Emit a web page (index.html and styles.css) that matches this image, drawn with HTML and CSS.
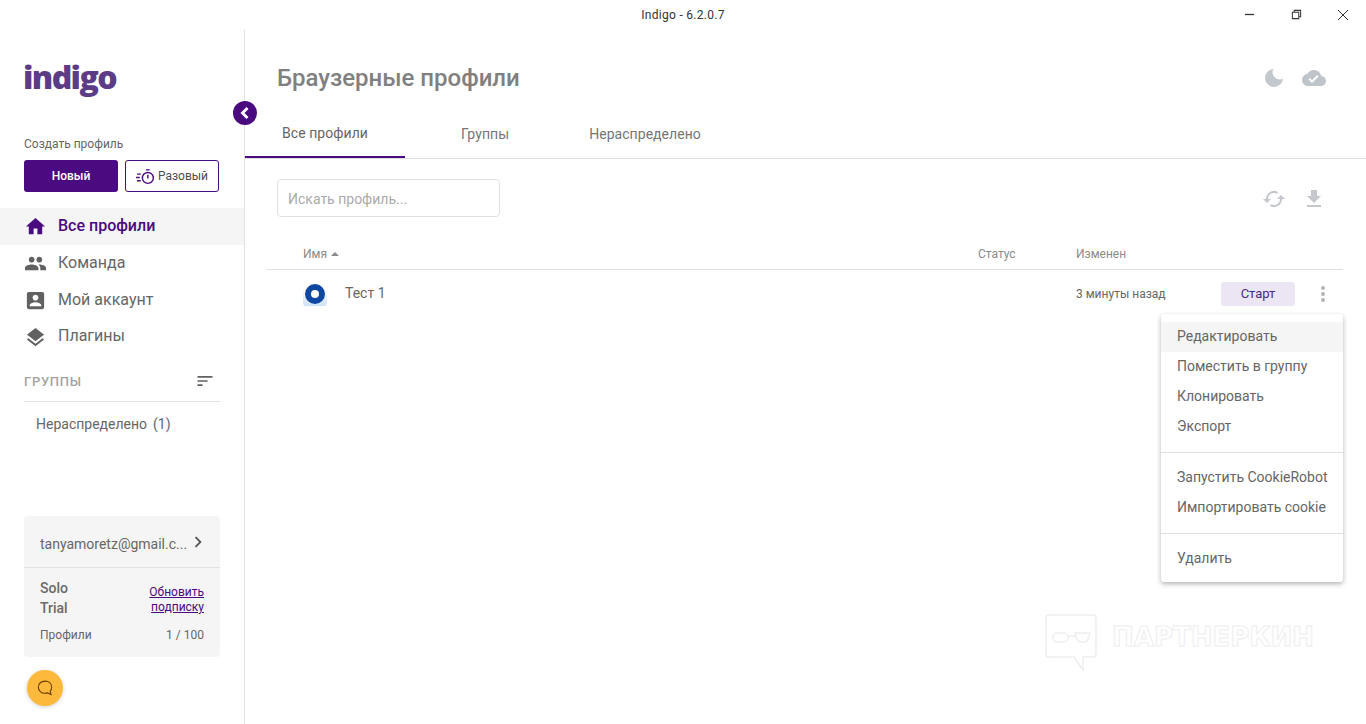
FILE: index.html
```html
<!DOCTYPE html>
<html lang="ru">
<head>
<meta charset="utf-8">
<title>Indigo</title>
<link rel="stylesheet" href="styles.css">
</head>
<body>
<header class="titlebar">
  <span class="titlebar-title">Indigo - 6.2.0.7</span>
  <div class="win-controls">
    <svg class="win-icon" viewBox="0 0 12 12"><path d="M1 6h10" stroke="#333" stroke-width="1.4" fill="none"/></svg>
    <svg class="win-icon" viewBox="0 0 12 12"><path d="M1.5 3.5h7v7h-7zM3.5 3.5v-2h7v7h-2" stroke="#333" stroke-width="1.1" fill="none"/></svg>
    <svg class="win-icon" viewBox="0 0 12 12"><path d="M1 1l10 10M11 1L1 11" stroke="#333" stroke-width="1" fill="none"/></svg>
  </div>
</header>
<div class="app">
  <aside class="sidebar">
    <div class="logo">indigo</div>
    <div class="create-label">Создать профиль</div>
    <div class="create-buttons">
      <button class="btn-primary">Новый</button>
      <button class="btn-outline">
        <svg class="timer-icon" viewBox="0 0 20 18"><g fill="none" stroke="#4a0a80" stroke-width="1.5"><circle cx="12.5" cy="10.5" r="5.8"/><path d="M12.5 7.2V11M10.5 2h4M1 6.5h4M0 10h4M1 13.5h4"/></g></svg>
        <span>Разовый</span>
      </button>
    </div>
    <nav class="nav">
      <a class="nav-item active"><svg viewBox="0 0 24 24"><path d="M10 20v-6h4v6h5v-8h3L12 3 2 12h3v8z"/></svg>Все профили</a>
      <a class="nav-item"><svg viewBox="0 0 24 24"><path d="M16 11c1.66 0 2.99-1.34 2.99-3S17.66 5 16 5s-3 1.34-3 3 1.34 3 3 3zm-8 0c1.66 0 2.99-1.34 2.99-3S9.66 5 8 5 5 6.34 5 8s1.34 3 3 3zm0 2c-2.33 0-7 1.17-7 3.5V19h14v-2.5c0-2.33-4.67-3.5-7-3.5zm8 0c-.29 0-.62.02-.97.05 1.16.84 1.97 1.97 1.97 3.45V19h6v-2.5c0-2.33-4.67-3.5-7-3.5z"/></svg>Команда</a>
      <a class="nav-item"><svg viewBox="0 0 24 24"><path d="M3 5v14c0 1.1.89 2 2 2h14c1.1 0 2-.9 2-2V5c0-1.1-.9-2-2-2H5c-1.11 0-2 .9-2 2zm12 4c0 1.66-1.34 3-3 3s-3-1.34-3-3 1.34-3 3-3 3 1.34 3 3zm-9 8c0-2 4-3.1 6-3.1s6 1.1 6 3.1v1H6v-1z"/></svg>Мой аккаунт</a>
      <a class="nav-item"><svg viewBox="0 0 24 24"><path d="M11.99 18.54l-7.37-5.73L3 14.07l9 7 9-7-1.63-1.27-7.38 5.74zM12 16l7.36-5.73L21 9l-9-7-9 7 1.63 1.27L12 16z"/></svg>Плагины</a>
    </nav>
    <div class="groups-head">
      <span>ГРУППЫ</span>
      <svg viewBox="0 0 24 24"><path d="M3 6h18v2H3zM3 11h12v2H3zM3 16h6v2H3z"/></svg>
    </div>
    <div class="groups-item"><span>Нераспределено</span><span>(1)</span></div>
    <div class="account">
      <div class="account-head">
        <span>tanyamoretz@gmail.c...</span>
        <svg viewBox="0 0 24 24"><path d="M8.6 16.6L13.2 12 8.6 7.4 10 6l6 6-6 6z"/></svg>
      </div>
      <div class="account-body">
        <div class="plan-row">
          <div class="plan">Solo<br>Trial</div>
          <a class="upgrade">Обновить<br>подписку</a>
        </div>
        <div class="usage"><span>Профили</span><span>1 / 100</span></div>
      </div>
    </div>
    <div class="fab">
      <svg viewBox="0 0 16 16"><path d="M8 2.5c3 0 5.3 1.9 5.3 4.8 0 1.4-.5 2.5-1.2 3.3l.7 2.6-2.8-1.3c-.6.2-1.3.3-2 .3-3 0-5.3-2-5.3-4.9S5 2.5 8 2.5z" fill="none" stroke="#6b3f00" stroke-width=".9"/></svg>
    </div>
  </aside>
  <button class="collapse"><svg viewBox="0 0 24 24"><path d="M15 6l-6 6 6 6" fill="none" stroke="#fff" stroke-width="3.4"/></svg></button>
  <main class="main">
    <div class="main-head">
      <h1>Браузерные профили</h1>
      <div class="head-icons">
        <svg class="moon" viewBox="0 0 20 20"><path d="M9.5 1a9 9 0 1 0 9.5 9.5A7 7 0 0 1 9.5 1z"/></svg>
        <svg class="cloud" viewBox="0 0 24 24"><path d="M19.35 10.04A7.49 7.49 0 0 0 12 4C9.11 4 6.6 5.64 5.35 8.04A5.994 5.994 0 0 0 0 14c0 3.31 2.69 6 6 6h13c2.76 0 5-2.24 5-5 0-2.64-2.05-4.78-4.65-4.96zM10 17l-3.5-3.5 1.41-1.41L10 14.17 15.18 9l1.41 1.41L10 17z"/></svg>
      </div>
    </div>
    <div class="tabs">
      <a class="tab active">Все профили</a>
      <a class="tab">Группы</a>
      <a class="tab">Нераспределено</a>
    </div>
    <div class="toolbar">
      <input class="search" type="text" placeholder="Искать профиль...">
      <div class="tool-icons">
        <svg viewBox="0 0 24 24"><path d="M19 8l-4 4h3a6 6 0 0 1-8.8 5.3l-1.5 1.5A8 8 0 0 0 20 12h3l-4-4zM6 12a6 6 0 0 1 8.8-5.3l1.5-1.5A8 8 0 0 0 4 12H1l4 4 4-4H6z"/></svg>
        <svg viewBox="0 0 24 24"><path d="M19 9h-4V3H9v6H5l7 7 7-7zM5 18v2h14v-2H5z"/></svg>
      </div>
    </div>
    <div class="table">
      <div class="table-head">
        <div class="col-name">Имя <span class="sort"></span></div>
        <div class="col-status">Статус</div>
        <div class="col-changed">Изменен</div>
      </div>
      <div class="table-row">
        <div class="col-name name-cell">
          <span class="browser"><span class="browser-ring"></span></span>
          <span class="name-text">Тест 1</span>
        </div>
        <div class="col-status"></div>
        <div class="col-changed changed-cell">3 минуты назад</div>
        <button class="start">Старт</button>
        <svg class="dots" viewBox="0 0 6 18"><circle cx="3" cy="3" r="2"/><circle cx="3" cy="9" r="2"/><circle cx="3" cy="15" r="2"/></svg>
      </div>
    </div>
  </main>
</div>
<div class="menu">
  <div class="menu-item hover">Редактировать</div>
  <div class="menu-item">Поместить в группу</div>
  <div class="menu-item">Клонировать</div>
  <div class="menu-item">Экспорт</div>
  <div class="menu-sep"></div>
  <div class="menu-item">Запустить CookieRobot</div>
  <div class="menu-item">Импортировать cookie</div>
  <div class="menu-sep"></div>
  <div class="menu-item">Удалить</div>
</div>
<div class="watermark">
  <svg viewBox="0 0 54 58"><g fill="none" stroke="#eeeeee" stroke-width="1.5"><path d="M4 1h44a3 3 0 0 1 3 3v36a3 3 0 0 1-3 3H38v13l-9-13H4a3 3 0 0 1-3-3V4a3 3 0 0 1 3-3z"/><rect x="8" y="19" width="15" height="9" rx="4"/><path d="M30 19h15l-2 6a4 4 0 0 1-4 3h-3a4 4 0 0 1-4-3zM23 22h7"/></g></svg>
  <span>ПАРТНЕРКИН</span>
</div>
</body>
</html>
```
FILE: styles.css
```css
* { box-sizing: border-box; }
html, body { margin: 0; height: 724px; overflow: hidden; background: #fff; }
body { font-family: Roboto, "Liberation Sans", sans-serif; color: #666; position: relative; }
svg { display: block; flex: none; }
a { cursor: pointer; }
button { font-family: inherit; cursor: pointer; }

.titlebar { height: 30px; display: flex; align-items: center; justify-content: center; position: relative; font-size: 12px; color: #333; }
.titlebar-title { letter-spacing: .3px; }
.win-controls { position: absolute; right: 17px; top: 9px; display: flex; gap: 35px; }
.win-icon { width: 11px; height: 11px; }
.win-controls .win-icon:nth-child(2) { margin-left: 1px; }
.win-controls .win-icon:last-child { width: 12px; height: 12px; }

.app { display: flex; height: 694px; position: relative; }
.sidebar { width: 245px; border-right: 1px solid #e2e2e2; display: flex; flex-direction: column; position: relative; }
.logo { margin: 24px 0 0 23px; height: 50px; font-family: "Open Sans", sans-serif; font-weight: 800; font-size: 32px; line-height: 46px; letter-spacing: -1.6px; color: #5c3c87; }
.create-label { margin: 33px 0 0 24px; font-size: 12px; line-height: 14px; color: #666; }
.create-buttons { display: flex; gap: 7px; margin: 9px 0 0 24px; }
.btn-primary { width: 94px; height: 32px; border: 0; border-radius: 3px; background: #4a0a80; color: #fff; font-size: 12px; font-weight: 500; }
.btn-outline { width: 94px; height: 32px; background: #fff; border: 1px solid #4a0a80; border-radius: 3px; color: #4d4d4d; font-size: 12px; display: flex; align-items: center; justify-content: center; gap: 3px; padding: 0; }
.timer-icon { width: 19px; height: 17px; }

.nav { margin-top: 16px; display: flex; flex-direction: column; }
.nav-item { height: 37px; display: flex; align-items: center; gap: 11px; padding: 0 0 3px 24px; font-size: 16px; color: #666; }
.nav-item svg { width: 23px; height: 23px; fill: #616161; margin-top: 3px; }
.nav-item.active { background: #f5f5f5; color: #4a0a80; font-weight: 500; }
.nav-item.active svg { fill: #4a0a80; }
.nav-item:last-child { height: 36px; }

.groups-head { margin: 9px 24px 0; height: 38px; border-bottom: 1px solid #e2e2e2; display: flex; justify-content: space-between; align-items: center; padding: 0 5px 3px 0; font-size: 13px; font-weight: 500; color: #a3a3a3; letter-spacing: .7px; }
.groups-head svg { width: 20px; height: 20px; fill: #616161; }
.groups-item { margin: 13px 0 0 36px; display: flex; gap: 6px; font-size: 14px; line-height: 18px; color: #666; }

.account { position: absolute; left: 24px; top: 486px; width: 196px; height: 141px; background: #f5f5f5; border-radius: 4px; }
.account-head { height: 52px; border-bottom: 1px solid #e2e2e2; padding: 4px 14px 0 16px; display: flex; align-items: center; justify-content: space-between; font-size: 14px; color: #666; }
.account-head svg { width: 22px; height: 22px; fill: #555; margin-top: -4px; }
.account-body { padding: 10px 16px 0; }
.plan-row { display: flex; justify-content: space-between; align-items: flex-start; }
.plan { font-size: 14px; line-height: 20px; font-weight: 500; color: #6a6a6a; }
.upgrade { font-size: 12px; line-height: 15px; text-decoration: underline; color: #4a0a80; text-align: right; margin-top: 7px; }
.usage { display: flex; justify-content: space-between; font-size: 12px; line-height: 14px; margin-top: 10px; color: #666; }

.fab { position: absolute; left: 27px; top: 640px; width: 36px; height: 36px; border-radius: 50%; background: #fdb93c; box-shadow: 0 1px 4px rgba(0,0,0,.18); display: flex; align-items: center; justify-content: center; }
.fab svg { width: 20px; height: 20px; }

.collapse { position: absolute; left: 233px; top: 71px; width: 24px; height: 24px; padding: 2px; border: 0; border-radius: 50%; background: #4a0a80; z-index: 2; }

.main { flex: 1; min-width: 0; display: flex; flex-direction: column; }
.main-head { height: 78px; padding: 0 40px 0 32px; display: flex; align-items: flex-start; justify-content: space-between; }
.main-head h1 { margin: 34px 0 0; font-size: 24px; line-height: 28px; font-weight: 500; color: #808080; }
.head-icons { display: flex; align-items: center; gap: 18px; margin-top: 36px; }
.moon { width: 20px; height: 20px; fill: #c3c8ce; }
.cloud { width: 24px; height: 24px; fill: #bfc4ca; }

.tabs { height: 51px; display: flex; border-bottom: 1px solid #e0e0e0; }
.tab { width: 160px; height: 50px; display: flex; align-items: center; justify-content: center; font-size: 14px; font-weight: 400; color: #757575; padding-top: 2px; letter-spacing: .05px; }
.tab.active { color: #666; border-bottom: 2px solid #4a0a80; }

.toolbar { height: 78px; padding: 20px 40px 0 32px; display: flex; justify-content: space-between; align-items: flex-start; }
.search { width: 223px; height: 38px; border: 1px solid #e0e0e0; border-radius: 4px; padding: 2px 10px 0; font-family: inherit; font-size: 14px; outline: 0; }
.search::placeholder { color: #aaa; opacity: 1; }
.tool-icons { display: flex; gap: 16px; margin-top: 8px; }
.tool-icons svg { width: 24px; height: 24px; fill: #c4c8cd; }

.table { margin: 0 23px 0 22px; }
.table-head { height: 33px; border-bottom: 1px solid #e0e0e0; display: flex; align-items: center; font-size: 12px; color: #8a8a8a; padding-top: 1px; }
.table-row { height: 47px; display: flex; align-items: center; font-size: 14px; position: relative; }
.col-name { width: 711px; padding-left: 36px; display: flex; align-items: center; gap: 4px; }
.col-status { width: 98px; }
.col-changed { width: 145px; }
.sort { width: 0; height: 0; border-left: 4px solid transparent; border-right: 4px solid transparent; border-bottom: 4px solid #8a8a8a; }
.name-cell { gap: 18px; }
.name-text { margin-top: -2px; }
.browser { width: 24px; height: 24px; background: linear-gradient(#fff 25%, #cfe2f7); border-radius: 3px; display: flex; align-items: center; justify-content: center; }
.browser-ring { width: 20px; height: 20px; border-radius: 50%; border: 6.5px solid #0d47a1; background: #fff; }
.changed-cell { font-size: 12px; color: #666; }
.start { width: 74px; height: 24px; border: 0; border-radius: 3px; background: #ece5f4; color: #4a2a80; font-size: 13px; padding: 0; }
.dots { width: 6px; height: 18px; margin-left: 25px; fill: #b5b5b5; }

.menu { position: absolute; left: 1161px; top: 314px; width: 182px; height: 268px; padding-top: 8px; background: #fff; border-radius: 3px; box-shadow: 0 2px 5px rgba(0,0,0,.3); z-index: 3; }
.menu-item { height: 30px; padding: 0 0 2px 16px; display: flex; align-items: center; font-size: 14px; color: #666; white-space: nowrap; }
.menu-item.hover { background: #f5f5f5; }
.menu-sep { height: 1px; background: #e0e0e0; margin: 10px 0 10px; }

.watermark { position: absolute; left: 1045px; top: 614px; display: flex; align-items: center; gap: 13px; }
.watermark svg { width: 54px; height: 58px; }
.watermark span { font-family: "DejaVu Sans", sans-serif; font-size: 26px; font-weight: 700; color: #fff; -webkit-text-stroke: 1px #eeeeee; margin-bottom: 12px; }
```
